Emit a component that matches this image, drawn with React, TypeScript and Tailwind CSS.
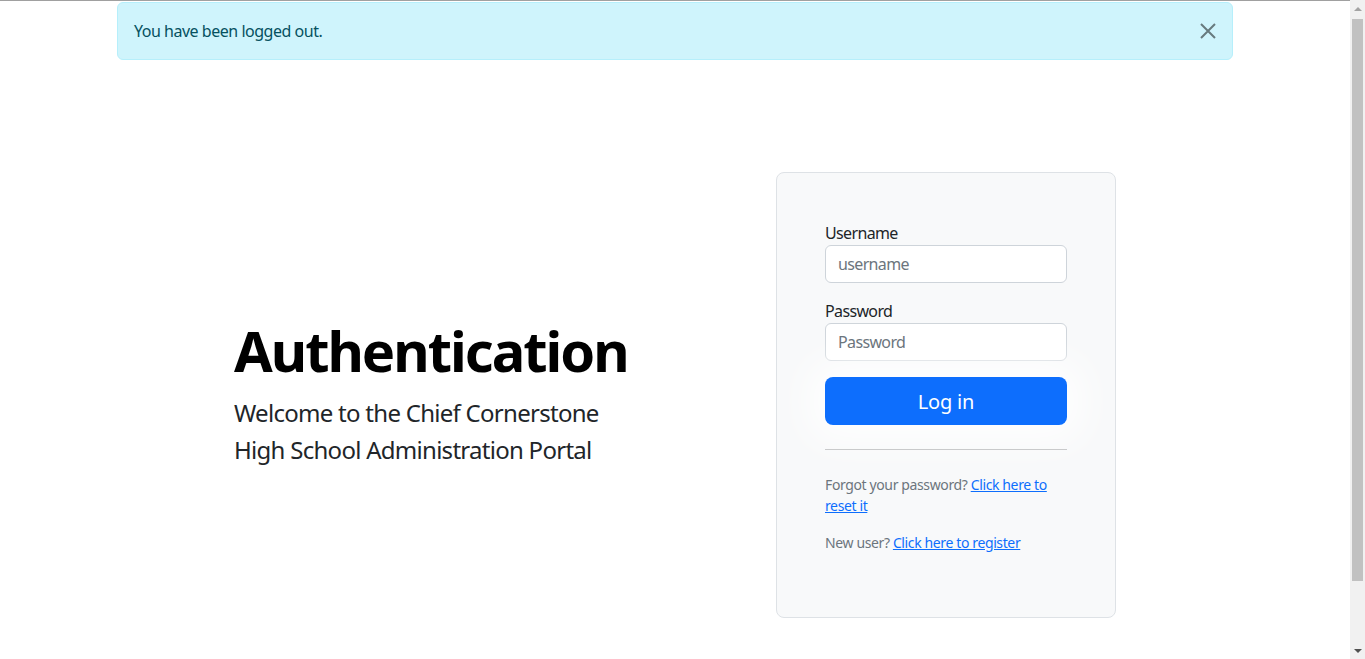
import { useState } from "react";

const font = { fontFamily: '"Noto Sans", "Segoe UI", "Liberation Sans", sans-serif' };

function CloseIcon() {
  return (
    <svg width="16" height="16" viewBox="0 0 16 16" aria-hidden>
      <path d="M1 1L15 15M15 1L1 15" stroke="#000" strokeOpacity="0.5" strokeWidth="2" fill="none" />
    </svg>
  );
}

function Scrollbar() {
  return (
    <div className="w-[15px] h-[659px] bg-[#f1f1f1] flex flex-col items-center shrink-0">
      <div className="h-[17px] flex items-center justify-center">
        <div className="w-0 h-0 border-l-[4px] border-r-[4px] border-b-[4px] border-l-transparent border-r-transparent border-b-[#a3a3a3]" />
      </div>
      <div className="w-[11px] h-[562px] bg-[#c1c1c1] mt-[2px]" />
      <div className="flex-1" />
      <div className="h-[17px] flex items-center justify-center">
        <div className="w-0 h-0 border-l-[4px] border-r-[4px] border-t-[4px] border-l-transparent border-r-transparent border-t-[#505050]" />
      </div>
    </div>
  );
}

export default function App() {
  const [showAlert, setShowAlert] = useState(true);

  return (
    <div className="flex w-[1365px] h-[659px] overflow-hidden bg-white text-[#212529]" style={font}>
      <div className="w-[1350px] flex flex-col">
        <div className="h-px bg-[#a0a0a0]" />

        <div className="w-[1116px] mx-auto">
          {/* Alert */}
          <div className="mt-px h-[58px]">
            {showAlert && (
              <div className="flex items-center justify-between h-[58px] pl-4 pr-4 border border-[#b6effb] bg-[#cff4fc] text-[#055160] rounded-[6px] text-[16px] leading-6 tracking-[-0.03em]">
                <span>You have been logged out.</span>
                <button type="button" onClick={() => setShowAlert(false)} className="p-0">
                  <CloseIcon />
                </button>
              </div>
            )}
          </div>

          {/* Hero + form */}
          <div className="flex items-center mt-[112px]">
            <div className="flex-1 pl-[117px]">
              <h1 className="text-[56px] font-bold leading-none mb-4 text-black tracking-[-2px]">Authentication</h1>
              <p className="text-[24px] leading-[37px] max-w-[400px] tracking-[-0.03em]">
                Welcome to the Chief Cornerstone High School Administration Portal
              </p>
            </div>

            <form className="w-[340px] mr-[117px] p-12 border border-[#dee2e6] rounded-[8px] bg-[#f8f9fa]">
              <label className="block text-[16px] leading-6 tracking-[-0.04em]">Username</label>
              <input
                type="text"
                placeholder="username"
                className="block w-full h-[38px] px-3 mb-4 bg-white border border-[#ced4da] rounded-[6px] text-[16px] tracking-[-0.04em] placeholder:text-[#6c757d] outline-none"
              />
              <label className="block text-[16px] leading-6 tracking-[-0.04em]">Password</label>
              <input
                type="password"
                placeholder="Password"
                className="block w-full h-[38px] px-3 mb-4 bg-white border border-[#ced4da] rounded-[6px] text-[16px] tracking-[-0.04em] placeholder:text-[#6c757d] outline-none"
              />
              <button
                type="button"
                className="block w-full h-[48px] pt-px bg-[#0d6efd] text-white text-[20px] tracking-[-0.01em] rounded-[8px] shadow-[0_0_40px_16px_rgba(255,255,255,0.9)]"
              >
                Log in
              </button>
              <hr className="my-6 border-0 border-t border-[#c9cacb]" />
              <p className="text-[14px] leading-[21px] text-[#6c757d] mb-4 tracking-[-0.027em]">
                Forgot your password?{" "}
                <a href="#" className="text-[#0d6efd] underline">
                  Click here to reset it
                </a>
              </p>
              <p className="text-[14px] leading-[21px] text-[#6c757d] mb-4 tracking-[-0.027em]">
                New user?{" "}
                <a href="#" className="text-[#0d6efd] underline">
                  Click here to register
                </a>
              </p>
            </form>
          </div>
        </div>
      </div>
      <Scrollbar />
    </div>
  );
}
